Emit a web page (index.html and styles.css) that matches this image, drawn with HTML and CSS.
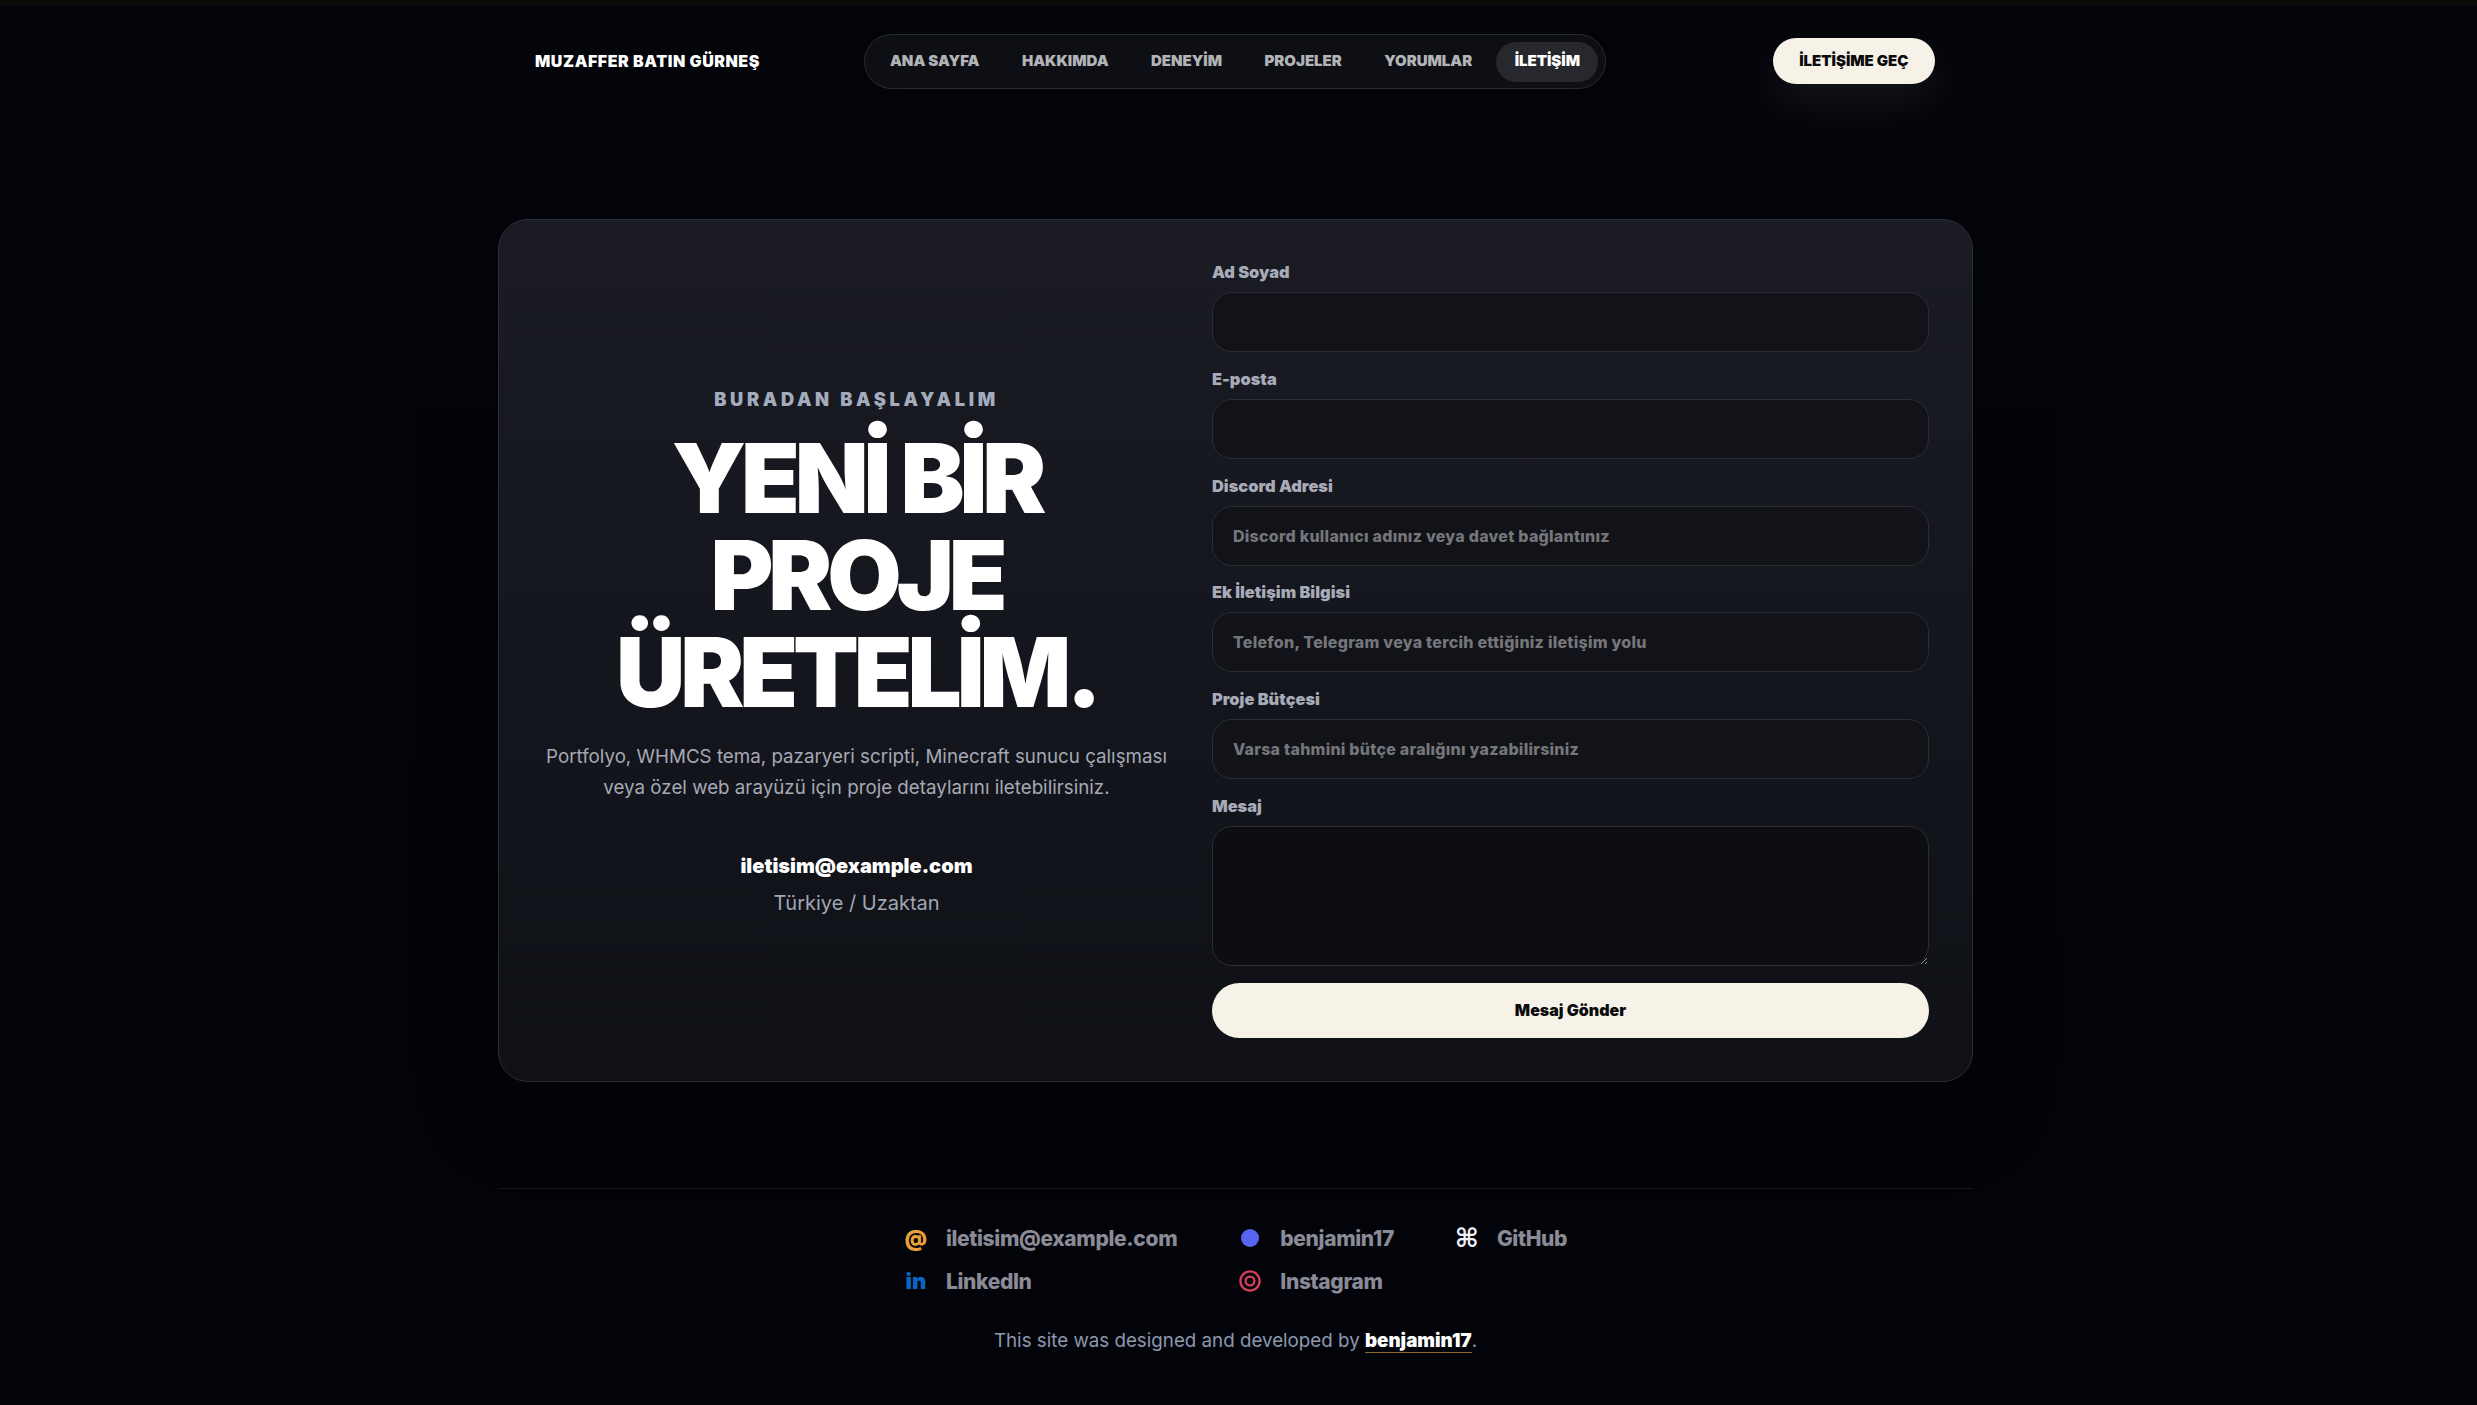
FILE: index.html
```html
<!DOCTYPE html>
<html lang="tr">
<head>
<meta charset="utf-8">
<title>İletişim</title>
<link rel="stylesheet" href="styles.css">
</head>
<body>
<div class="page">
  <header class="topbar">
    <a class="brand" href="#">MUZAFFER BATIN GÜRNEŞ</a>
    <nav class="nav">
      <a href="#">ANA SAYFA</a>
      <a href="#">HAKKIMDA</a>
      <a href="#">DENEYİM</a>
      <a href="#">PROJELER</a>
      <a href="#">YORUMLAR</a>
      <a href="#" class="active">İLETİŞİM</a>
    </nav>
    <a class="cta" href="#">İLETİŞİME GEÇ</a>
  </header>
  <main class="card">
    <section class="intro">
      <p class="eyebrow">BURADAN BAŞLAYALIM</p>
      <h1>YENİ BİR PROJE ÜRETELİM.</h1>
      <p class="lead">Portfolyo, WHMCS tema, pazaryeri scripti, Minecraft sunucu çalışması veya özel web arayüzü için proje detaylarını iletebilirsiniz.</p>
      <a class="mail" href="#">iletisim@example.com</a>
      <p class="place">Türkiye / Uzaktan</p>
    </section>
    <form class="form">
      <label class="field"><span>Ad Soyad</span><input type="text"></label>
      <label class="field"><span>E-posta</span><input type="email"></label>
      <label class="field"><span>Discord Adresi</span><input type="text" placeholder="Discord kullanıcı adınız veya davet bağlantınız"></label>
      <label class="field"><span>Ek İletişim Bilgisi</span><input type="text" placeholder="Telefon, Telegram veya tercih ettiğiniz iletişim yolu"></label>
      <label class="field"><span>Proje Bütçesi</span><input type="text" placeholder="Varsa tahmini bütçe aralığını yazabilirsiniz"></label>
      <label class="field"><span>Mesaj</span><textarea></textarea></label>
      <button type="button" class="send">Mesaj Gönder</button>
    </form>
  </main>
  <footer class="footer">
    <div class="links">
      <a href="#"><i class="ico mail-ico">@</i>iletisim@example.com</a>
      <a href="#"><i class="ico"><svg class="svg-ico" viewBox="0 0 22 22"><circle cx="11" cy="11" r="9" fill="#5865f2"/></svg></i>benjamin17</a>
      <a href="#"><i class="ico git-ico">⌘</i>GitHub</a>
      <a href="#"><i class="ico in-ico">in</i>LinkedIn</a>
      <a href="#"><i class="ico"><svg class="svg-ico" viewBox="0 0 22 22" fill="none" stroke="#d63f5e" stroke-width="2.3"><circle cx="11" cy="11" r="9.6"/><circle cx="11" cy="11" r="4.4"/></svg></i>Instagram</a>
    </div>
    <p class="credit">This site was designed and developed by <a href="#">benjamin17</a>.</p>
  </footer>
</div>
</body>
</html>
```
FILE: styles.css
```css
* { box-sizing: border-box; }
html, body { margin: 0; padding: 0; height: 100%; }
body {
  background: linear-gradient(#0a0a08 0, #0a0a09 5px, #04050b 7px, #03040a 100%);
  color: #fff;
  font-family: Inter, "Liberation Sans", sans-serif;
  overflow: hidden;
  padding-right: 6px;
}
a { color: inherit; text-decoration: none; }
p, h1 { margin: 0; }
.page { width: 1475px; margin: 0 auto; }

.topbar {
  display: grid;
  grid-template-columns: 1fr auto 1fr;
  align-items: center;
  padding: 34px 38px 0 37px;
  height: 89px;
}
.brand { font-size: 16px; line-height: 20px; margin-top: -1px; font-weight: 900; letter-spacing: .035em; }
.nav {
  display: flex;
  gap: 6px;
  height: 55px;
  align-items: center;
  padding: 0 7px;
  border: 1px solid #292b34;
  border-radius: 28px;
  background: #0e0f14;
  box-shadow: 0 18px 40px rgba(0,0,0,.35);
}
.nav a {
  display: block;
  padding: 0 18.2px;
  height: 40px;
  line-height: 38px;
  border-radius: 20px;
  font-size: 15px;
  font-weight: 900;
  color: #b3b4b8;
}
.nav a.active { background: #27282e; color: #fff; }
.cta {
  justify-self: end;
  height: 46px;
  line-height: 45px;
  margin-top: -1px;
  padding: 0 26.5px;
  border-radius: 23px;
  background: #f6f2e8;
  color: #0b0b0d;
  font-size: 15px;
  font-weight: 900;
  box-shadow: 0 18px 40px rgba(246,242,232,.08);
}

.card {
  display: flex;
  gap: 42px;
  margin-top: 130px;
  height: 863px;
  padding: 42px 43px 42px 44px;
  border: 1px solid #2b2d34;
  border-radius: 30px;
  background: linear-gradient(#1a1b23, #0f1117);
  box-shadow: 0 30px 80px rgba(0,0,0,.45);
}
.intro {
  flex: 1;
  min-width: 0;
  padding-top: 2px;
  display: flex;
  flex-direction: column;
  align-items: center;
  justify-content: center;
  text-align: center;
}
.eyebrow { font-size: 18.3px; font-weight: 900; letter-spacing: .2em; color: #a3acbd; }
h1 {
  font-size: 96px;
  line-height: 97px;
  font-weight: 900;
  letter-spacing: -.053em;
  margin-top: 20px;
  width: 560px;
}
.lead { font-size: 18.75px; line-height: 31px; color: #a5a9b5; margin-top: 20px; }
.mail { font-size: 20px; font-weight: 900; margin-top: 51px; }
.place { font-size: 20px; color: #a0a6b4; margin-top: 13px; }

.form { width: 717px; flex: none; display: flex; flex-direction: column; }
.field { display: block; margin-bottom: 16.8px; }
.field span {
  display: block;
  font-size: 16.4px;
  line-height: 20px;
  font-weight: 900;
  color: #a7abb8;
  margin-bottom: 10px;
}
.field input, .field textarea {
  display: block;
  width: 100%;
  height: 60px;
  padding: 0 20px;
  border: 1px solid #2b2d33;
  border-radius: 20px;
  background: #111318;
  color: #fff;
  font: 800 16px Inter, sans-serif;
  letter-spacing: .25px;
  outline: none;
}
.field input::placeholder { color: #75767b; opacity: 1; }
.field textarea { height: 140px; padding: 16px 20px; background: #0c0e13; resize: vertical; }
.field:nth-child(6) { margin-bottom: 17px; }
.send {
  height: 55px;
  border: 0;
  border-radius: 28px;
  background: #f6f2e8;
  color: #0b0b0d;
  font: 900 16px Inter, sans-serif;
}

.footer { margin-top: 106px; border-top: 1px solid #15161c; padding-top: 36px; text-align: center; }
.links {
  display: grid;
  grid-template-columns: repeat(3, auto);
  justify-content: center;
  column-gap: 63px;
  row-gap: 17px;
  padding-left: 2px;
  text-align: left;
}
.links a { display: flex; align-items: center; height: 26px; font-size: 21px; font-weight: 800; letter-spacing: -.017em; color: #8a8b96; }
.ico { width: 20px; margin-right: 20px; font-style: normal; text-align: center; flex: none; font-weight: 800; letter-spacing: 0; display: flex; justify-content: center; align-items: center; }
.svg-ico { width: 22px; height: 22px; flex: none; display: block; }
.mail-ico { color: #e9a13b; font-size: 21px; font-weight: 900; }
.git-ico { color: #eef0f8; font-family: "DejaVu Sans", sans-serif; font-size: 26px; font-weight: 700; }
.in-ico { color: #0a66c2; font-size: 22px; font-weight: 900; }
.credit { margin-top: 35px; font-size: 18.75px; color: #8d97ad; }
.credit a { color: #fff; font-weight: 900; border-bottom: 1px solid #8a6a30; }
```
